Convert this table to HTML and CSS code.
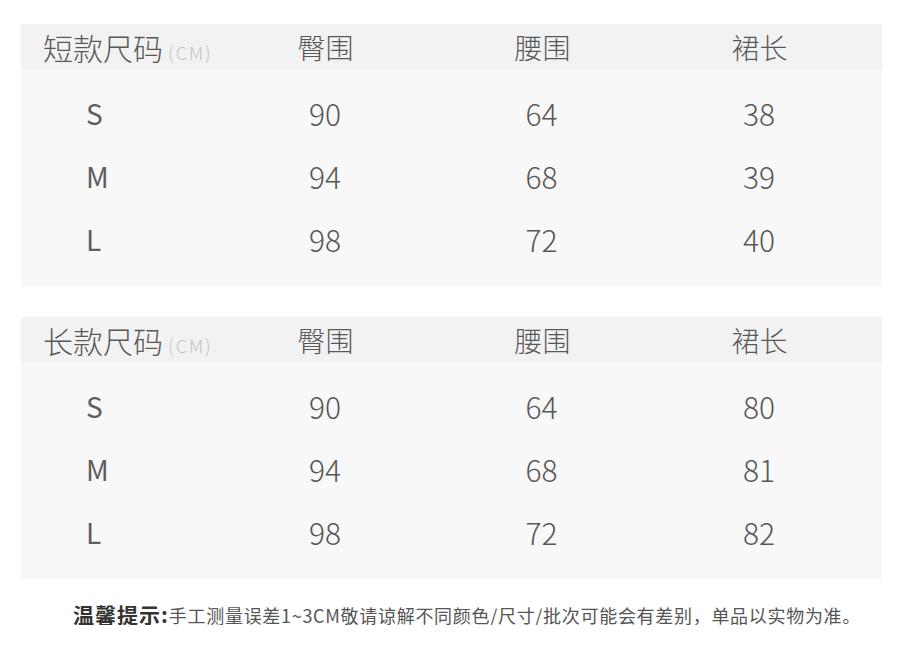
FILE: index.html
```html
<!DOCTYPE html>
<html lang="zh">
<head>
<meta charset="utf-8">
<link rel="stylesheet" href="styles.css">
</head>
<body>
<main class="page">
  <section class="chart">
    <div class="row head">
      <div class="cell first"><span class="title">短款尺码</span><span class="unit">(CM)</span></div>
      <div class="cell">臀围</div>
      <div class="cell">腰围</div>
      <div class="cell">裙长</div>
    </div>
    <div class="body">
      <div class="row"><div class="cell size">S</div><div class="cell">90</div><div class="cell">64</div><div class="cell">38</div></div>
      <div class="row"><div class="cell size">M</div><div class="cell">94</div><div class="cell">68</div><div class="cell">39</div></div>
      <div class="row"><div class="cell size">L</div><div class="cell">98</div><div class="cell">72</div><div class="cell">40</div></div>
    </div>
  </section>
  <section class="chart">
    <div class="row head">
      <div class="cell first"><span class="title">长款尺码</span><span class="unit">(CM)</span></div>
      <div class="cell">臀围</div>
      <div class="cell">腰围</div>
      <div class="cell">裙长</div>
    </div>
    <div class="body">
      <div class="row"><div class="cell size">S</div><div class="cell">90</div><div class="cell">64</div><div class="cell">80</div></div>
      <div class="row"><div class="cell size">M</div><div class="cell">94</div><div class="cell">68</div><div class="cell">81</div></div>
      <div class="row"><div class="cell size">L</div><div class="cell">98</div><div class="cell">72</div><div class="cell">82</div></div>
    </div>
  </section>
  <p class="note"><b>温馨提示:</b>手工测量误差1~3CM敬请谅解不同颜色/尺寸/批次可能会有差别，单品以实物为准。</p>
</main>
</body>
</html>
```
FILE: styles.css
```css
html, body {
  margin: 0;
  padding: 0;
  background: #fff;
}
.page {
  padding: 24px 0 0 21px;
  display: flex;
  flex-direction: column;
  gap: 31px;
  font-family: "Noto Sans CJK SC", "Noto Sans", sans-serif;
  font-weight: 300;
  color: #585858;
}
.chart {
  width: 861px;
  height: 262px;
  background: #f8f8f8;
  display: flex;
  flex-direction: column;
}
.row {
  display: grid;
  grid-template-columns: 196px 216px 217px 218px;
  align-items: center;
  height: 63px;
  font-size: 30px;
}
.row.head {
  grid-template-columns: 196px 217px 217px 217px;
  height: 46px;
  background: #f2f2f2;
  font-size: 28px;
}
.body {
  padding-top: 11px;
}
.cell {
  text-align: center;
  line-height: 1;
}
.cell.first {
  text-align: left;
  padding-left: 22px;
  display: flex;
  align-items: baseline;
}
.title {
  font-size: 30px;
}
.unit {
  font-size: 18px;
  color: #c4c4c4;
  margin-left: 5px;
  letter-spacing: 2px;
}
.cell.size {
  text-align: left;
  padding-left: 65px;
  font-size: 28px;
  font-weight: 400;
  color: #5e5e5e;
}
.note {
  margin: -6px 0 0 52px;
  font-size: 18px;
  letter-spacing: 0.7px;
  color: #555;
  line-height: 1;
  font-weight: 400;
}
.note b {
  font-size: 21px;
  letter-spacing: 1px;
  color: #333;
  font-weight: 700;
}
```
